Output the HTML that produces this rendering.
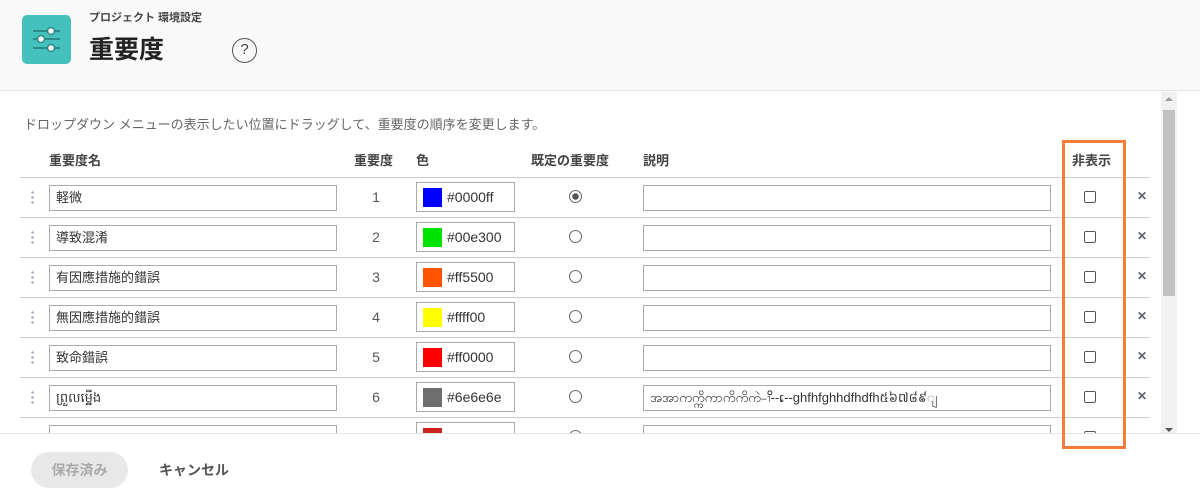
<!DOCTYPE html>
<html><head><meta charset="utf-8"><style>
*{box-sizing:border-box;margin:0;padding:0}
body{width:1200px;height:501px;overflow:hidden;background:#fff;font-family:"Liberation Sans","Noto Sans CJK JP",sans-serif;color:#333;position:relative}
.hdr{position:absolute;left:0;top:0;width:1200px;height:91px;background:#f9f9f9;border-bottom:1px solid #e3e3e3}
.icon{position:absolute;left:22px;top:15px;width:49px;height:49px;background:#45c1bd;border-radius:5px}
.sub{position:absolute;left:89px;top:9px;font-size:11px;font-weight:bold;color:#444}
.title{position:absolute;left:89px;top:30px;font-size:25px;font-weight:bold;color:#222}
.help{position:absolute;left:232px;top:38px;width:25px;height:25px;border:1.5px solid #555;border-radius:50%;text-align:center;font-size:15px;line-height:22px;color:#444}
.desc{position:absolute;left:24px;top:114px;font-size:13px;color:#666}
.th{position:absolute;top:150px;font-size:13px;font-weight:bold;color:#444}
.line{position:absolute;left:20px;width:1130px;height:1px;background:#ccc}
.inp{position:absolute;height:26px;border:1px solid #aaa;background:#fff;font-size:13px;padding-left:6px;line-height:24px;color:#333}
.num{position:absolute;left:366px;width:20px;text-align:center;font-size:14px;color:#555}
.col{position:absolute;left:416px;width:99px;height:30px;border:1px solid #aaa;background:#fff}
.col i{position:absolute;left:6px;top:5px;width:19px;height:19px}
.col span{position:absolute;left:30px;top:6px;font-size:14px;color:#333}
.rad{position:absolute;left:569px;width:13px;height:13px;border:1px solid #666;border-radius:50%;background:#fff}
.chk{position:absolute;left:1084px;width:12px;height:12px;border:1px solid #555;border-radius:2px;background:#fff}
.x{position:absolute;left:1137px;font-size:12px;font-weight:bold;color:#5a6270}
.dots{position:absolute;left:31px;width:3px;height:14px;background:radial-gradient(circle,#aab 1.2px,transparent 1.4px) 0 0/3px 5px}
.foot{position:absolute;left:0;top:433px;width:1200px;height:68px;background:#fff;border-top:1px solid #e3e3e3}
</style></head><body>
<div class="hdr">
<div class="icon"><svg width="49" height="49" viewBox="0 0 49 49"><g stroke="#2a8a86" stroke-width="2"><line x1="11" y1="16" x2="38" y2="16"/><line x1="11" y1="24" x2="38" y2="24"/><line x1="11" y1="33" x2="38" y2="33"/></g><g fill="#fff" stroke="#2a8a86" stroke-width="1.5"><circle cx="29" cy="16" r="3.5"/><circle cx="19" cy="24" r="3.5"/><circle cx="29" cy="33" r="3.5"/></g></svg></div>
<div class="sub">プロジェクト 環境設定</div>
<div class="title">重要度</div>
<div class="help">?</div>
</div>
<div class="desc">ドロップダウン メニューの表示したい位置にドラッグして、重要度の順序を変更します。</div>
<div class="th" style="left:49px">重要度名</div>
<div class="th" style="left:354px">重要度</div>
<div class="th" style="left:416px">色</div>
<div class="th" style="left:531px">既定の重要度</div>
<div class="th" style="left:643px">説明</div>
<div class="th" style="left:1072px">非表示</div>
<div class="line" style="top:177px"></div>

<div class="dots" style="top:190px"></div><div class="inp" style="left:49px;top:185px;width:288px">軽微</div><div class="num" style="top:189px">1</div><div class="col" style="top:182px"><i style="background:#0000ff"></i><span>#0000ff</span></div><div class="rad" style="top:190px;background:radial-gradient(circle,#555 3px,#fff 3.5px)"></div><div class="inp" style="left:643px;top:185px;width:408px"></div><div class="chk" style="top:191px"></div><div class="x" style="top:189px">✕</div>
<div class="line" style="top:217px"></div>
<div class="dots" style="top:230px"></div><div class="inp" style="left:49px;top:225px;width:288px">導致混淆</div><div class="num" style="top:229px">2</div><div class="col" style="top:222px"><i style="background:#00e300"></i><span>#00e300</span></div><div class="rad" style="top:230px"></div><div class="inp" style="left:643px;top:225px;width:408px"></div><div class="chk" style="top:231px"></div><div class="x" style="top:229px">✕</div>
<div class="line" style="top:257px"></div>
<div class="dots" style="top:270px"></div><div class="inp" style="left:49px;top:265px;width:288px">有因應措施的錯誤</div><div class="num" style="top:269px">3</div><div class="col" style="top:262px"><i style="background:#ff5500"></i><span>#ff5500</span></div><div class="rad" style="top:270px"></div><div class="inp" style="left:643px;top:265px;width:408px"></div><div class="chk" style="top:271px"></div><div class="x" style="top:269px">✕</div>
<div class="line" style="top:297px"></div>
<div class="dots" style="top:310px"></div><div class="inp" style="left:49px;top:305px;width:288px">無因應措施的錯誤</div><div class="num" style="top:309px">4</div><div class="col" style="top:302px"><i style="background:#ffff00"></i><span>#ffff00</span></div><div class="rad" style="top:310px"></div><div class="inp" style="left:643px;top:305px;width:408px"></div><div class="chk" style="top:311px"></div><div class="x" style="top:309px">✕</div>
<div class="line" style="top:337px"></div>
<div class="dots" style="top:350px"></div><div class="inp" style="left:49px;top:345px;width:288px">致命錯誤</div><div class="num" style="top:349px">5</div><div class="col" style="top:342px"><i style="background:#ff0000"></i><span>#ff0000</span></div><div class="rad" style="top:350px"></div><div class="inp" style="left:643px;top:345px;width:408px"></div><div class="chk" style="top:351px"></div><div class="x" style="top:349px">✕</div>
<div class="line" style="top:377px"></div>
<div class="dots" style="top:390px"></div><div class="inp" style="left:49px;top:385px;width:288px">ព្រួលម្ភ្លើង</div><div class="num" style="top:389px">6</div><div class="col" style="top:382px"><i style="background:#6e6e6e"></i><span>#6e6e6e</span></div><div class="rad" style="top:390px"></div><div class="inp" style="left:643px;top:385px;width:408px;overflow:hidden;white-space:nowrap">အအာကက္ကိကာကိကိကဲ-ၢိိိိ--ເ--ghfhfghhdfhdfh៥៦៧៨៩ျ</div><div class="chk" style="top:391px"></div><div class="x" style="top:389px">✕</div>
<div class="line" style="top:417px"></div>
<div class="inp" style="left:49px;top:425px;width:288px"></div><div class="col" style="top:422px"><i style="background:#cc2222"></i></div><div class="rad" style="top:430px"></div><div class="inp" style="left:643px;top:425px;width:408px"></div><div class="chk" style="top:431px"></div>

<div class="foot">
<div style="position:absolute;left:31px;top:18px;width:97px;height:36px;border-radius:18px;background:#e8e8e8;color:#aaa;font-size:14px;font-weight:bold;text-align:center;line-height:36px">保存済み</div>
<div style="position:absolute;left:159px;top:26px;font-size:14px;font-weight:bold;color:#555">キャンセル</div>
</div>
<div style="position:absolute;left:1062px;top:140px;width:64px;height:309px;border:3px solid #f47d3b;z-index:5"></div>
<div style="position:absolute;left:1161px;top:92px;width:16px;height:341px;background:#f1f1f1"></div>
<div style="position:absolute;left:1163px;top:110px;width:12px;height:186px;background:#c1c1c1"></div>
<div style="position:absolute;left:1165px;top:97px;border:4px solid transparent;border-bottom:4px solid #999;border-top:0"></div>
<div style="position:absolute;left:1165px;top:428px;border:4px solid transparent;border-top:4px solid #555;border-bottom:0"></div>
</body></html>
